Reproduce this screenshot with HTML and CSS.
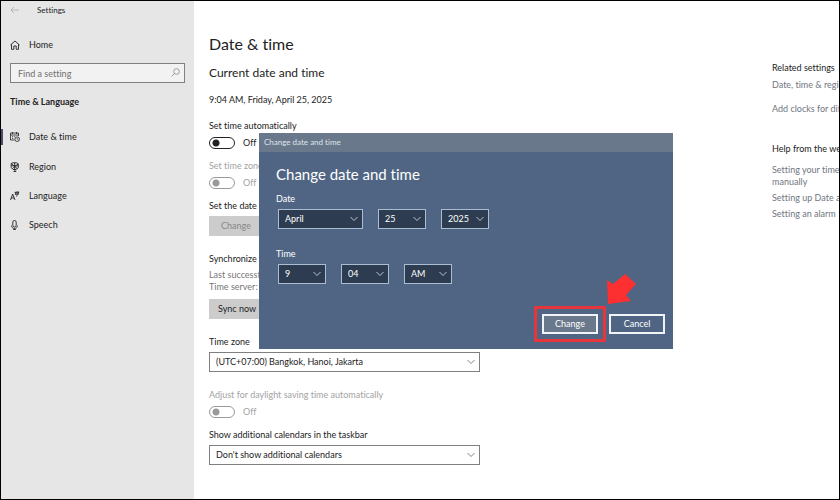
FILE: index.html
```html
<!DOCTYPE html>
<html lang="en">
<head>
<meta charset="utf-8">
<title>Settings</title>
<link rel="stylesheet" href="styles.css">
</head>
<body>
<svg width="0" height="0" class="defs" aria-hidden="true">
  <symbol id="chevron" viewBox="0 0 8 6"><path d="M.5 1 4 4.500 7.500 1" fill="none" stroke="currentColor" stroke-width=".9"/></symbol>
</svg>
<div class="window">
  <nav class="sidebar">
    <header class="titlebar">
      <button class="back" type="button" aria-label="Back"><svg width="9" height="8" viewBox="0 0 9 8"><path d="M4 1 1 4l3 3M1 4h8" fill="none" stroke="currentColor" stroke-width=".8"/></svg></button>
      <span>Settings</span>
    </header>
    <a class="nav-item home" href="#"><svg width="10" height="10" viewBox="0 0 10 10"><path d="M.5 5 5 1l4.500 4M1.500 4.300v5h2.300V6h2.400v3.300h2.300v-5" fill="none" stroke="currentColor" stroke-width=".9"/></svg>Home</a>
    <div class="search">
      <input type="search" placeholder="Find a setting" aria-label="Find a setting">
      <svg width="9" height="9" viewBox="0 0 9 9"><circle cx="5.500" cy="3.500" r="2.800" fill="none" stroke="currentColor" stroke-width=".8"/><path d="M3.500 5.500.5 8.500" stroke="currentColor" stroke-width=".8"/></svg>
    </div>
    <h2 class="category">Time &amp; Language</h2>
    <a class="nav-item current" href="#"><svg width="10" height="10" viewBox="0 0 10 10"><path d="M4.500 8H.5V1h8v3M.5 3h8M2.500 0v2M6.500 0v2M2 4.700h1.200M4.200 4.700h1M2 6.400h1.200" fill="none" stroke="currentColor" stroke-width=".8"/><circle cx="7.200" cy="7.200" r="2.300" fill="none" stroke="currentColor" stroke-width=".8"/><path d="M7.200 5.800v1.500h1.200" fill="none" stroke="currentColor" stroke-width=".6"/></svg>Date &amp; time</a>
    <a class="nav-item" href="#"><svg width="10" height="10" viewBox="0 0 10 10"><path d="M1.200 1.500 3 .8h3.500l1.800 1v4L6 7.500H3L1.200 5.500zM1.200 1.500l6 5M8 2 2.500 6.500M4.700.8v6.700M1.200 3.800h7" fill="none" stroke="currentColor" stroke-width=".9"/><path d="M4.900 7.500v2M3.500 9.500h2.800" fill="none" stroke="currentColor" stroke-width=".9"/></svg>Region</a>
    <a class="nav-item" href="#"><svg width="10" height="10" viewBox="0 0 10 10"><path d="M.5 9 2.700 3 5 9M1.300 7h2.900" fill="none" stroke="currentColor" stroke-width=".9"/><path d="M4.500 1.300h4.700M5.300 3h3.500M5.500 1.300v2.500M8.500.5C8.500 3 7.500 4.500 6 5.500M7 .3v3.500" fill="none" stroke="currentColor" stroke-width=".8"/></svg>Language</a>
    <a class="nav-item" href="#"><svg width="10" height="10" viewBox="0 0 10 10"><rect x="2.800" y=".5" width="3.400" height="6.500" rx="1.700" fill="none" stroke="currentColor" stroke-width=".9"/><path d="M1.500 5.500c0 4 6 4 6 0M4.500 8.500V10M3 9.600h3" fill="none" stroke="currentColor" stroke-width=".8"/></svg>Speech</a>
  </nav>

  <main class="content">
    <h1>Date &amp; time</h1>
    <h2>Current date and time</h2>
    <p class="now">9:04 AM, Friday, April 25, 2025</p>

    <section class="setting">
      <label for="auto-time">Set time automatically</label>
      <div class="toggle"><input id="auto-time" type="checkbox" role="switch"><span>Off</span></div>
    </section>
    <section class="setting disabled">
      <label for="auto-zone">Set time zone</label>
      <div class="toggle"><input id="auto-zone" type="checkbox" role="switch" disabled><span>Off</span></div>
    </section>
    <section class="setting wide">
      <label for="manual">Set the date a</label>
      <button id="manual" class="button" type="button" disabled>Change</button>
    </section>
    <section class="setting wide">
      <h3>Synchronize y</h3>
      <p class="note">Last successfu<br>Time server: t</p>
      <button class="button" type="button">Sync now</button>
    </section>
    <section class="setting wide">
      <label for="zone">Time zone</label>
      <div class="select"><select id="zone"><option>(UTC+07:00) Bangkok, Hanoi, Jakarta</option></select><svg><use href="#chevron"/></svg></div>
    </section>
    <section class="setting disabled">
      <label for="dst">Adjust for daylight saving time automatically</label>
      <div class="toggle"><input id="dst" type="checkbox" role="switch" disabled><span>Off</span></div>
    </section>
    <section class="setting">
      <label for="calendars">Show additional calendars in the taskbar</label>
      <div class="select"><select id="calendars"><option>Don't show additional calendars</option></select><svg><use href="#chevron"/></svg></div>
    </section>
  </main>

  <aside class="related">
    <h3>Related settings</h3>
    <a href="#">Date, time &amp; regio</a>
    <a class="spaced" href="#">Add clocks for diff</a>
    <h3 class="help">Help from the web</h3>
    <a href="#">Setting your time<br>manually</a>
    <a href="#">Setting up Date an</a>
    <a href="#">Setting an alarm</a>
  </aside>

  <div class="dialog" role="dialog" aria-labelledby="dialog-title">
    <div class="dialog-bar">Change date and time</div>
    <form class="dialog-body">
      <h2 id="dialog-title">Change date and time</h2>
      <fieldset>
        <legend>Date</legend>
        <div class="fields">
          <div class="select month"><select aria-label="Month"><option>April</option></select><svg><use href="#chevron"/></svg></div>
          <div class="select"><select aria-label="Day"><option>25</option></select><svg><use href="#chevron"/></svg></div>
          <div class="select"><select aria-label="Year"><option>2025</option></select><svg><use href="#chevron"/></svg></div>
        </div>
      </fieldset>
      <fieldset>
        <legend>Time</legend>
        <div class="fields">
          <div class="select"><select aria-label="Hour"><option>9</option></select><svg><use href="#chevron"/></svg></div>
          <div class="select"><select aria-label="Minute"><option>04</option></select><svg><use href="#chevron"/></svg></div>
          <div class="select"><select aria-label="AM or PM"><option>AM</option></select><svg><use href="#chevron"/></svg></div>
        </div>
      </fieldset>
      <div class="actions">
        <div class="marked">
          <button class="primary" type="button">Change</button>
          <span class="frame"></span>
          <svg class="arrow" width="30" height="32" viewBox="0 0 30 32"><path d="M18 1 29 11 19 22 24 28 1 31 0 7 6 11z" fill="#fc3030"/></svg>
        </div>
        <button type="button">Cancel</button>
      </div>
    </form>
  </div>
</div>
</body>
</html>
```
FILE: styles.css
```css
* { box-sizing: border-box; }
body, h1, h2, h3, p, fieldset { margin: 0; }
body {
  font: 9px/12px Lato, "Open Sans", sans-serif;
  font-variant-ligatures: none;
  color: #222;
  background: #fff;
}
h1, h2, h3 { font-weight: 400; }
h3 { font-size: 9px; }
a { color: inherit; text-decoration: none; }
button, input, select { font: inherit; font-variant-ligatures: none; color: inherit; margin: 0; border-radius: 0; }
.defs { position: absolute; }

.window {
  position: relative;
  display: flex;
  min-height: 100vh;
  border: 1px solid #000;
  overflow: hidden;
}

/* Sidebar */
.sidebar { flex: 0 0 193px; background: #e6e6e6; }
.titlebar { display: flex; align-items: center; gap: 18px; height: 18px; padding-left: 9px; font-size: 8px; }
.back { display: flex; padding: 0; border: 0; background: none; color: #aaa; }
.nav-item { display: flex; align-items: center; gap: 9px; height: 29px; padding-left: 9px; }
.nav-item svg { flex: none; }
.nav-item.home { margin-top: 11px; }
.nav-item.current { box-shadow: inset 2px 0 #4c4a68; height: 16px; margin: 21px 0 7px; }
.search { position: relative; margin: 4px 9px 0 9px; }
.search input {
  display: block; width: 100%; height: 20px; padding: 0 7px;
  border: 1px solid #808080; outline: 0; background: #f2f2f2; appearance: none;
}
.search input::placeholder { color: #707070; opacity: 1; }
.search svg { position: absolute; right: 5px; top: 5px; color: #888; }
.category { margin: 13px 0 0 9px; font-size: 9px; font-weight: 700; }

/* Main column */
.content { flex: 1; padding: 32px 0 20px 15px; white-space: nowrap; }
.content h1 { font-size: 16px; line-height: 22px; }
.content h2 { margin-top: 9px; font-size: 12px; line-height: 18px; }
.now { margin: 12px 0 14px; }
.setting { max-width: 271px; margin-bottom: 10px; }
.setting.wide { margin-bottom: 17px; }
.setting label, .setting h3 { display: block; margin-bottom: 4px; }
.disabled { color: #a3a3a3; }
.toggle { display: flex; align-items: center; gap: 8px; height: 14px; }
.toggle input {
  appearance: none; width: 26px; height: 12px;
  border: 1px solid #222; border-radius: 6px;
  background: radial-gradient(circle at 6px 5px, #222 3px, transparent 4px);
}
.disabled .toggle input {
  border-color: #999;
  background: radial-gradient(circle at 6px 5px, #999 3px, transparent 4px);
}
.button { display: block; height: 20px; min-width: 54px; padding: 0 9px; border: 0; background: #ccc; }
.button:disabled { color: #888; }
.note { margin-bottom: 6px; line-height: 12px; color: #777; }

.select { position: relative; }
.select select {
  display: block; appearance: none; width: 100%; height: 20px;
  padding: 0 6px; border: 1px solid #808080; background: #fff;
}
.select svg { position: absolute; right: 5px; top: 7px; width: 8px; height: 6px; color: #777; pointer-events: none; }

/* Links column */
.related { flex: 0 0 67px; padding-top: 61px; overflow: hidden; white-space: nowrap; }
.related h3 { margin-bottom: 5px; }
.related a { display: block; margin-bottom: 4px; color: #707680; }
.related .spaced { margin-top: 12px; }
.related .help { margin: 28px 0 9px; }

/* Dialog */
.dialog {
  position: absolute; left: 258px; top: 132px; width: 414px;
  background: #4f6583; color: #fff;
}
.dialog-bar { height: 19px; padding-left: 5px; font-size: 8px; line-height: 19px; background: #69788a; color: #dfe4ea; }
.dialog-body { padding: 12px 8px 15px 17px; }
.dialog-body h2 { font-size: 15px; line-height: 20px; }
.dialog fieldset { border: 0; padding: 0; margin-top: 9px; }
.dialog fieldset + fieldset { margin-top: 19px; }
.dialog legend { padding: 0; }
.fields { display: flex; gap: 15px; margin-top: 4px; padding-left: 2px; }
.fields .select { width: 48px; }
.fields .month { width: 85px; }
.fields select { border-color: #a9bed3; background: #2d3c50; }
.fields .select svg { color: #c8d4e0; }
.actions { display: flex; justify-content: flex-end; gap: 11px; margin-top: 30px; }
.actions button { display: block; width: 56px; height: 20px; padding: 0; border: 2px solid #f0f4f8; background: none; }
.actions .primary { background: #69788a; }
.marked { position: relative; }
.frame { position: absolute; inset: -8px; border: 3px solid #e5353d; pointer-events: none; }
.arrow { position: absolute; left: 65px; top: -41px; }
```
